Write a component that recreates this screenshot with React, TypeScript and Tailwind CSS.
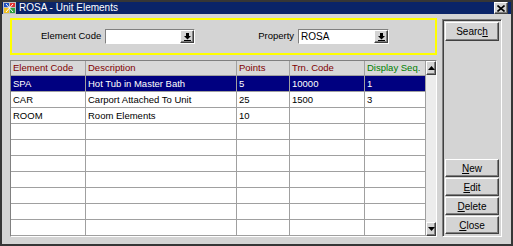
import React from 'react'

type Row = { code: string; desc: string; points: string; trn: string; seq: string }

const rows: Row[] = [
  { code: 'SPA', desc: 'Hot Tub in Master Bath', points: '5', trn: '10000', seq: '1' },
  { code: 'CAR', desc: 'Carport Attached To Unit', points: '25', trn: '1500', seq: '3' },
  { code: 'ROOM', desc: 'Room Elements', points: '10', trn: '', seq: '' },
  { code: '', desc: '', points: '', trn: '', seq: '' },
  { code: '', desc: '', points: '', trn: '', seq: '' },
  { code: '', desc: '', points: '', trn: '', seq: '' },
  { code: '', desc: '', points: '', trn: '', seq: '' },
  { code: '', desc: '', points: '', trn: '', seq: '' },
  { code: '', desc: '', points: '', trn: '', seq: '' },
  { code: '', desc: '', points: '', trn: '', seq: '' },
]

const raised =
  'bg-[#d4d4d4] border border-t-white border-l-white border-b-[#404040] border-r-[#404040] shadow-[inset_-1px_-1px_#808080]'

function DropArrow() {
  return (
    <svg width="7" height="8" viewBox="0 0 7 8">
      <rect x="2" y="0" width="3" height="3" fill="#000" />
      <path d="M0 3h7L3.5 6.5z" fill="#000" />
      <rect x="0" y="7" width="7" height="1" fill="#000" />
    </svg>
  )
}

function Combo({ value, width }: { value: string; width: string }) {
  return (
    <div className={`${width} h-[15px] flex bg-white border border-t-[#808080] border-l-[#808080] border-b-white border-r-white`}>
      <div className="flex-1 px-[2px] leading-[13px] text-[10px]">{value}</div>
      <div className={`${raised} w-[14px] h-[13px] flex items-center justify-center`}>
        <DropArrow />
      </div>
    </div>
  )
}

function Btn({ pre, u, post, h = 'h-[18px]' }: { pre: string; u: string; post: string; h?: string }) {
  return (
    <div className={`${raised} ${h} w-[54px] flex items-center justify-center text-[10px]`}>
      <span>
        {pre}
        <span className="underline">{u}</span>
        {post}
      </span>
    </div>
  )
}

const cols = ['w-[75px]', 'w-[151px]', 'w-[53px]', 'w-[75px]', 'w-[61px]']

export default function App() {
  return (
    <div className="w-[513px] h-[246px] bg-[#d4d4d4] border-2 border-[#363636] flex flex-col font-['Liberation_Sans',Arial,sans-serif] text-black">
      <div className="h-[15px] bg-[#0a2468] flex items-center pl-[1px] pr-[3px]">
        <svg width="13" height="12" viewBox="0 0 13 12" className="mr-[3px]">
          <rect x="0" y="0" width="13" height="12" fill="#c0c0c0" />
          <rect x="1" y="1" width="5" height="4" fill="#2050c0" />
          <rect x="7" y="1" width="5" height="4" fill="#e03030" />
          <rect x="1" y="6" width="5" height="5" fill="#f0c020" />
          <rect x="7" y="6" width="5" height="5" fill="#30a040" />
          <path d="M3 2l7 8M10 2L3 10" stroke="#fff" strokeWidth="1" />
        </svg>
        <span className="text-white text-[10px] leading-none">ROSA - Unit Elements</span>
        <div className={`${raised} ml-auto w-[14px] h-[12px] flex items-center justify-center`}>
          <svg width="8" height="7" viewBox="0 0 8 7">
            <path d="M0.5 0.5l7 6M7.5 0.5l-7 6" stroke="#000" strokeWidth="1.6" />
          </svg>
        </div>
      </div>

      <div className="flex-1 flex pt-[4px] pl-[8px] pr-[9px] pb-[7px] gap-[5px]">
        <div className="w-[427px] flex flex-col gap-[5px]">
          <div className="h-[37px] border-2 border-[#ffff00] flex items-center pl-[29px] text-[9.5px]">
            <span className="mr-[4px]">Element Code</span>
            <Combo value="" width="w-[90px]" />
            <span className="ml-[63px] mr-[4px]">Property</span>
            <Combo value="ROSA" width="w-[91px]" />
          </div>

          <div className="flex-1 flex border border-t-[#808080] border-l-[#808080] border-b-white border-r-white">
            <div className="flex-1 flex flex-col bg-white text-[9.5px]">
              <div className="h-[15px] flex bg-[#d8d8d8] border-b border-[#a0a0a0]">
                {['Element Code', 'Description', 'Points', 'Trn. Code', 'Display Seq.'].map((h, i) => (
                  <div
                    key={h}
                    className={`${cols[i]} px-[2px] leading-[14px] border-r border-[#a0a0a0] ${i === 4 ? 'text-[#008000]' : 'text-[#800000]'}`}
                  >
                    {h}
                  </div>
                ))}
              </div>
              {rows.map((r, ri) => {
                const sel = ri === 0
                return (
                  <div
                    key={ri}
                    className={`h-[16px] flex border-b border-[#a0a0a0] ${sel ? 'bg-[#000080] text-white' : ''}`}
                  >
                    {[r.code, r.desc, r.points, r.trn, r.seq].map((c, i) => (
                      <div key={i} className={`${cols[i]} px-[2px] leading-[15px] border-r border-[#a0a0a0]`}>
                        {c}
                      </div>
                    ))}
                  </div>
                )
              })}
            </div>
            <div className="w-[12px] flex flex-col bg-[#ececec]">
              <div className={`${raised} h-[14px] flex items-center justify-center`}>
                <svg width="7" height="4" viewBox="0 0 7 4">
                  <path d="M0 4h7L3.5 0z" fill="#000" />
                </svg>
              </div>
              <div className="flex-1" />
              <div className={`${raised} h-[14px] flex items-center justify-center`}>
                <svg width="7" height="4" viewBox="0 0 7 4">
                  <path d="M0 0h7L3.5 4z" fill="#000" />
                </svg>
              </div>
            </div>
          </div>
        </div>

        <div className="mt-[1px] w-[60px] flex flex-col items-center p-[2px] border border-t-[#808080] border-l-[#808080] border-b-white border-r-white shadow-[inset_1px_1px_#404040]">
          <Btn pre="Searc" u="h" post="" h="h-[19px]" />
          <div className="mt-auto flex flex-col gap-[1px]">
            <Btn pre="" u="N" post="ew" />
            <Btn pre="" u="E" post="dit" />
            <Btn pre="" u="D" post="elete" />
            <Btn pre="" u="C" post="lose" />
          </div>
        </div>
      </div>
    </div>
  )
}
